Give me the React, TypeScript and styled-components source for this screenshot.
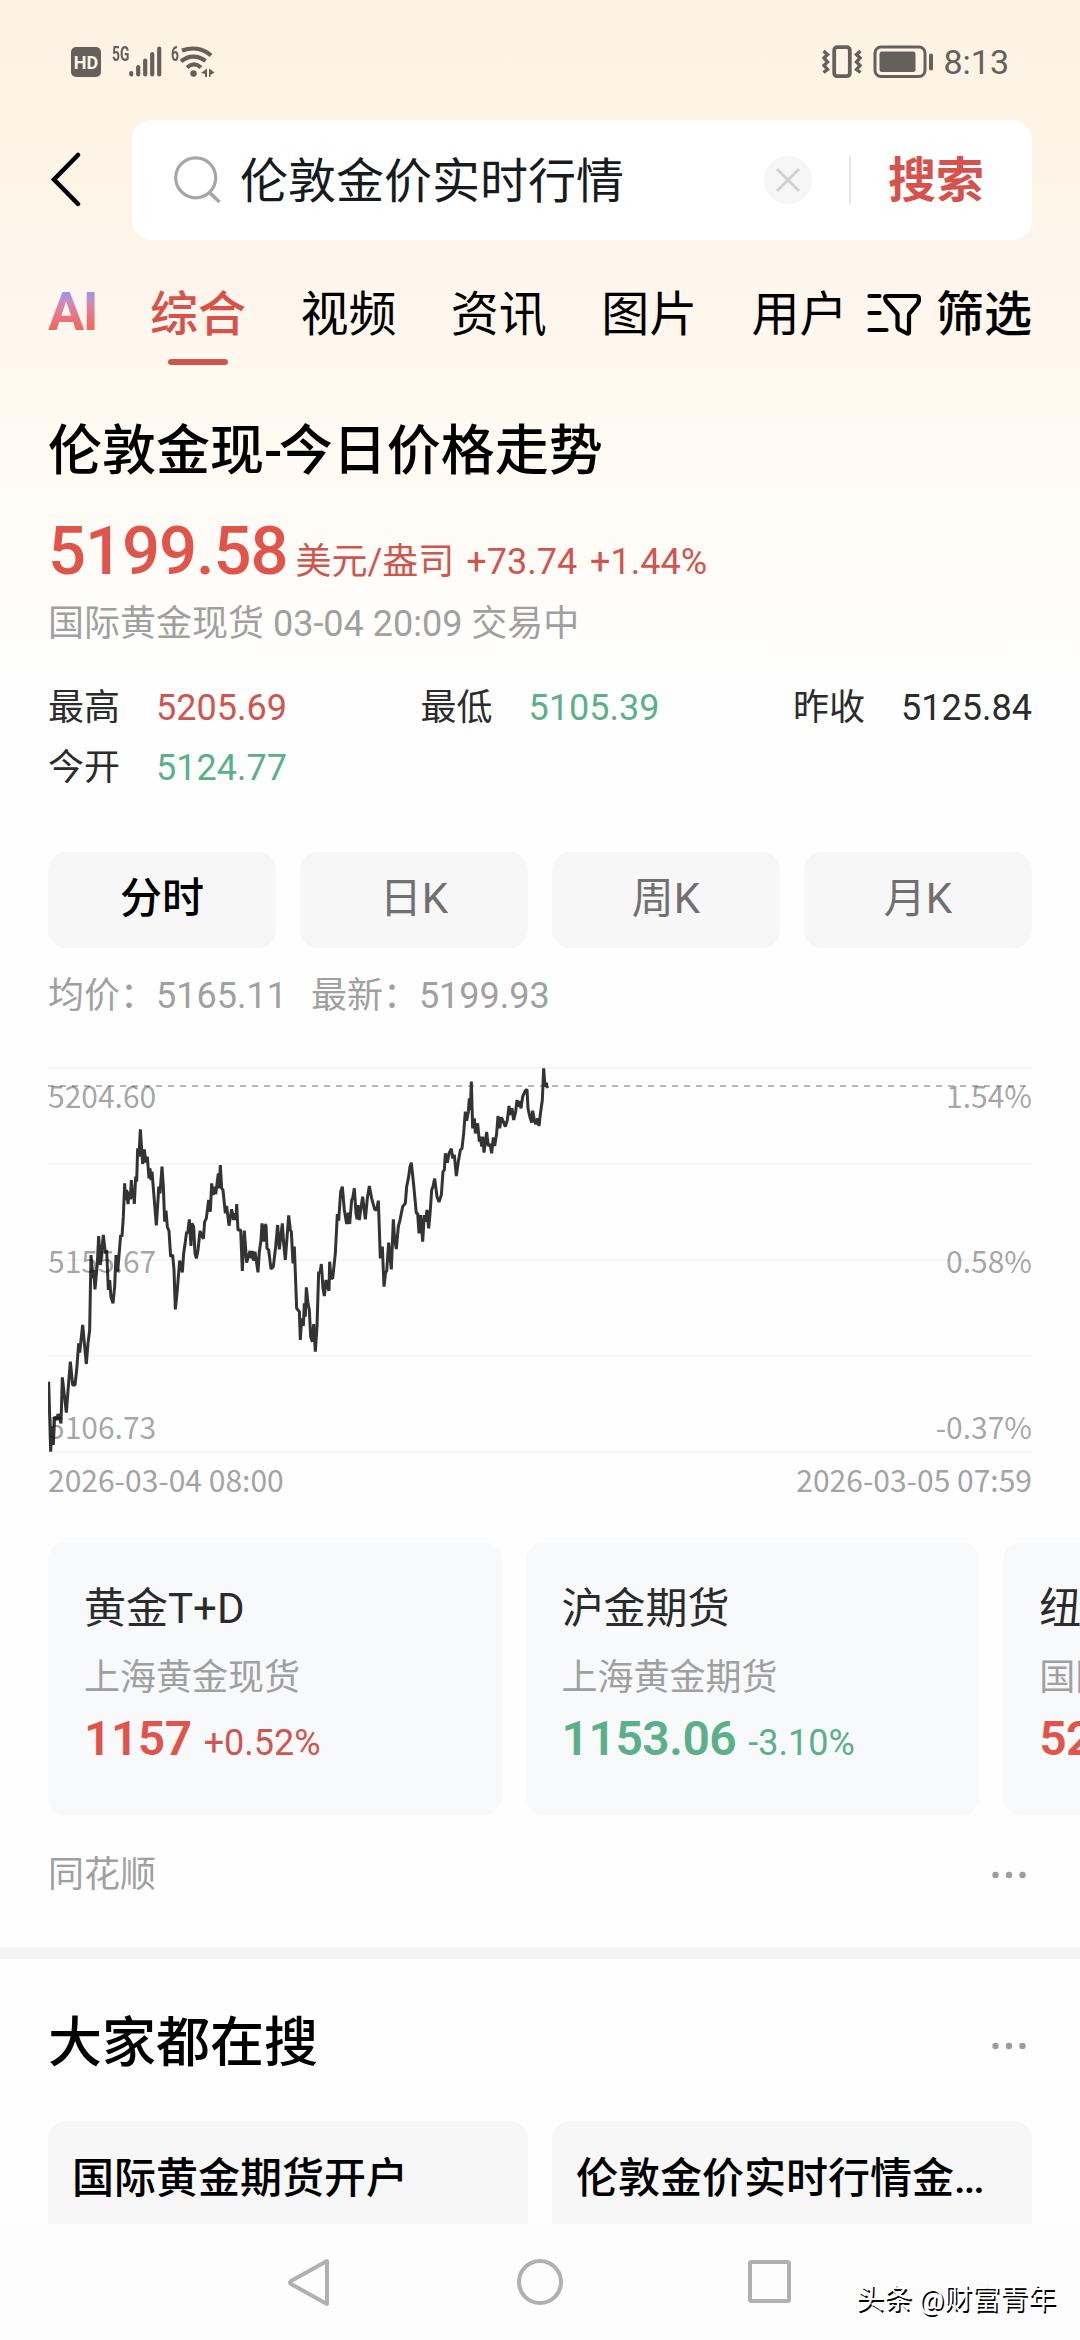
import React from "react";
import styled, { createGlobalStyle } from "styled-components";

const RED = "#e0554b";
const RED_SOFT = "#cf5650";
const GREEN = "#5bb08a";
const INK = "#65615a";
const UI = `Roboto, "Noto Sans CJK SC", sans-serif`;
const CJK = `"Noto Sans CJK SC", sans-serif`;

const GlobalStyle = createGlobalStyle`
  * { box-sizing: border-box; }
  body { margin: 0; background: #fefefe; font-family: ${UI}; }
  h1, h2, p { margin: 0; }
  button { border: 0; padding: 0; font: inherit; background: none; color: inherit; }
  svg { display: block; flex: none; }
`;

const Screen = styled.div`
  width: 1080px;
  height: 2340px;
  overflow: hidden;
  display: flex;
  flex-direction: column;
  background: linear-gradient(180deg, #fdf3e3 0, #fdf4e6 120px, #fef5ea 240px, #fff9f0 390px, #fffbf5 500px, #fffefb 620px, #fefefe 680px);
`;

/* status bar */
const StatusBar = styled.div`
  height: 120px;
  padding: 3px 71px 0 71px;
  display: flex;
  justify-content: space-between;
  align-items: center;
  color: ${INK};
`;
const StatusGroup = styled.div<{ $gap?: number }>`
  display: flex;
  align-items: center;
  gap: ${(p) => p.$gap ?? 0}px;
`;
const Hd = styled.span`
  width: 30px;
  height: 30px;
  border-radius: 5px;
  background: ${INK};
  color: #fdf4e6;
  font: 700 18px/31px Roboto, sans-serif;
  text-align: center;
`;
const NetLabel = styled.span<{ $left: number; $width: number }>`
  width: ${(p) => p.$width}px;
  margin-left: ${(p) => p.$left}px;
  font: 700 20px/16px Roboto, sans-serif;
  transform: scaleX(0.69);
  transform-origin: 0 50%;
  align-self: flex-start;
`;
const Clock = styled.span`
  margin-left: -3px;
  font-size: 34px;
  line-height: 40px;
`;

/* search */
const SearchRow = styled.div`
  height: 120px;
  padding-right: 48px;
  display: flex;
  align-items: center;
`;
const Back = styled.button`
  width: 132px;
  height: 120px;
  padding-left: 48px;
  display: flex;
  align-items: center;
`;
const SearchBox = styled.div`
  flex: 1;
  height: 120px;
  padding: 0 48px 0 42px;
  border-radius: 20px;
  background: #fff;
  display: flex;
  align-items: center;
`;
const Query = styled.span`
  flex: 1;
  margin-left: 16px;
  padding-top: 3px;
  font-size: 48px;
  line-height: 60px;
  color: #161b20;
`;
const Clear = styled.button`
  width: 48px;
  height: 48px;
  border-radius: 50%;
  background: #f6f6f6;
  display: grid;
  place-items: center;
`;
const Separator = styled.i`
  width: 2px;
  height: 48px;
  margin: 0 37px 0 37px;
  background: #e6e6e6;
`;
const SearchButton = styled.button`
  padding-top: 2px;
  font-size: 48px;
  line-height: 60px;
  font-weight: 700;
  color: #d6534d;
`;

/* tabs */
const Tabs = styled.nav`
  height: 126px;
  padding: 45px 48px 0 48px;
  display: flex;
  align-items: flex-start;
`;
const AiTab = styled.span`
  width: 102px;
  font: 700 54px/53px Roboto, sans-serif;
  letter-spacing: -1.5px;
  background: linear-gradient(180deg, #8f9bea 12%, #c78bc4 30%, #e8798c 52%, #ee6a66 78%);
  -webkit-background-clip: text;
  background-clip: text;
  color: transparent;
`;
const Tab = styled.span<{ $active?: boolean; $last?: boolean }>`
  width: 96px;
  margin-right: ${(p) => (p.$last ? 0 : 54.4)}px;
  font-size: 48px;
  line-height: 60px;
  font-weight: ${(p) => (p.$active ? 500 : 400)};
  color: ${(p) => (p.$active ? "#d6534d" : "#000")};
  white-space: nowrap;
  &::after {
    content: "";
    display: block;
    width: 60px;
    height: 6px;
    margin: 14px auto 0;
    border-radius: 3px;
    background: ${(p) => (p.$active ? RED_SOFT : "transparent")};
  }
`;
const Filter = styled.button`
  margin-left: auto;
  display: flex;
  align-items: center;
  gap: 15px;
  font-size: 48px;
  line-height: 60px;
  font-weight: 500;
  white-space: nowrap;
`;

/* quote */
const Quote = styled.section`
  padding: 51px 48px 0;
  display: flex;
  flex-direction: column;
`;
const Title = styled.h1`
  font-size: 54px;
  line-height: 70px;
  font-weight: 500;
  color: #000;
`;
const Tight = styled.span<{ $by: number }>`
  letter-spacing: -${(p) => p.$by}px;
`;
const PriceLine = styled.div`
  margin-top: 24px;
  height: 80px;
  display: flex;
  align-items: baseline;
  line-height: 80px;
  font-size: 36px;
  color: ${RED_SOFT};
  white-space: pre;
`;
const Price = styled.strong`
  font-size: 67px;
  font-weight: 500;
  letter-spacing: -1.1px;
  color: ${RED};
  margin-right: 8px;
`;
const Change = styled.span`
  margin-left: 12px;
  word-spacing: 4px;
`;
const Muted = styled.p<{ $top: number }>`
  margin-top: ${(p) => p.$top}px;
  font-size: 36px;
  line-height: 50px;
  color: #a0a0a0;
  white-space: pre;
`;
const Stats = styled.div`
  margin-top: 29px;
  display: grid;
  grid-template-columns: repeat(3, auto);
  justify-content: space-between;
  grid-auto-rows: 60px;
`;
const Stat = styled.div`
  display: flex;
  gap: 36px;
  font-size: 36px;
  line-height: 60px;
  color: #2b2b2b;
`;
const StatValue = styled.span<{ $color: string }>`
  color: ${(p) => p.$color};
`;
const Periods = styled.div`
  margin-top: 54px;
  display: grid;
  grid-template-columns: repeat(4, 1fr);
  gap: 24px;
`;
const Period = styled.button<{ $active?: boolean }>`
  height: 96px;
  border-radius: 18px;
  background: #f7f7f7;
  font-size: 42px;
  line-height: 93px;
  padding-bottom: 3px;
  font-weight: ${(p) => (p.$active ? 500 : 400)};
  color: ${(p) => (p.$active ? "#000" : "#707070")};
`;
const Averages = styled.div`
  margin-top: 23px;
  display: flex;
  gap: 24px;
  font-size: 36px;
  line-height: 50px;
  color: #a0a0a0;
`;

/* chart */
const Chart = styled.div`
  position: relative;
  height: 390px;
  margin-top: 43px;
  font-family: ${CJK};
  font-size: 30px;
  line-height: 40px;
  color: rgba(0, 0, 0, 0.37);
`;
const ScaleRow = styled.div<{ $top: number }>`
  position: absolute;
  left: 0;
  right: 0;
  top: ${(p) => p.$top}px;
  display: flex;
  justify-content: space-between;
`;
const TimeRow = styled.div`
  margin-top: 5px;
  display: flex;
  justify-content: space-between;
  font-family: ${CJK};
  font-size: 30px;
  line-height: 40px;
  color: #a3a3a3;
`;

/* related markets */
const Markets = styled.div`
  margin-top: 43px;
  padding-left: 48px;
  display: flex;
  gap: 24px;
  overflow: hidden;
`;
const Market = styled.article`
  flex: none;
  width: 453.6px;
  height: 273px;
  padding: 37px 36px 0;
  border-radius: 18px;
  background: #f8f9fb;
  display: flex;
  flex-direction: column;
  white-space: nowrap;
`;
const MarketName = styled.span`
  font-size: 42px;
  line-height: 60px;
  color: #2b2b2b;
`;
const MarketSource = styled.span`
  margin-top: 16px;
  font-size: 36px;
  line-height: 46px;
  color: #a0a0a0;
`;
const MarketPrice = styled.span<{ $up: boolean }>`
  margin-top: 8px;
  display: flex;
  align-items: baseline;
  gap: 12px;
  font-size: 36px;
  line-height: 60px;
  color: ${(p) => (p.$up ? RED_SOFT : GREEN)};
  b {
    font-size: 48px;
    font-weight: 600;
    letter-spacing: -0.5px;
    color: ${(p) => (p.$up ? RED : GREEN)};
  }
`;
const Footer = styled.div`
  margin-top: 35px;
  height: 97px;
  padding: 0 53px 0 48px;
  display: flex;
  align-items: flex-start;
  justify-content: space-between;
  font-size: 36px;
  line-height: 50px;
  color: #a0a0a0;
`;
const DotsBox = styled.span<{ $h: number }>`
  height: ${(p) => p.$h}px;
  display: flex;
  align-items: center;
`;
const Band = styled.div`
  height: 12px;
  flex: none;
  background: #f4f4f4;
`;

/* suggestions */
const Suggest = styled.section`
  height: 265px;
  flex: none;
  padding: 50px 48px 0;
  overflow: hidden;
`;
const SuggestHead = styled.div`
  display: flex;
  justify-content: space-between;
  padding-right: 5px;
`;
const SuggestTitle = styled.h2`
  font-size: 54px;
  line-height: 70px;
  font-weight: 500;
  color: #000;
`;
const SuggestGrid = styled.div`
  margin-top: 38px;
  display: grid;
  grid-template-columns: 1fr 1fr;
  gap: 24px;
`;
const SuggestCard = styled.div`
  height: 130px;
  padding: 28px 24px 0;
  border-radius: 18px;
  background: #f7f7f7;
  font-size: 42px;
  line-height: 60px;
  font-weight: 500;
  white-space: nowrap;
  color: #000;
`;

/* system navigation */
const NavBar = styled.div`
  flex: 1;
  position: relative;
  background: #fcfcfc;
  display: flex;
  justify-content: center;
  align-items: center;
  gap: 182px;
`;
const Watermark = styled.span`
  position: absolute;
  right: 24px;
  top: 58px;
  font-size: 28px;
  line-height: 36px;
  color: #fff;
  text-shadow: 1.5px 1.5px 0.5px #000;
`;

const SERIES =
  "56,1025 62,1235 66,1160 70,1215 74,1130 80,1140 84,1122 93,1150 97,1012 109,1118 115,1040 121,965 128,1035 135,1035 140,990 146,910 149,938 158,855 169,972 174,910 179,870 183,645 188,715 191,690 195,748 202,670 206,588 211,675 220,585 226,640 230,630 235,750 239,720 243,772 249,790 254,740 258,645 263,695 272,585 276,590 280,530 284,430 287,480 290,450 294,492 298,455 301,478 304,420 308,475 310,450 313,492 317,410 320,425 323,325 327,350 331,268 338,372 343,328 348,368 352,350 357,415 360,385 363,420 366,395 379,556 385,465 386,440 390,460 396,380 400,440 404,545 408,512 412,560 417,573 422,650 428,645 432,690 436,808 441,760 449,662 457,697 461,640 466,605 470,575 473,580 478,538 483,618 486,550 491,560 495,640 499,655 504,630 510,573 520,597 524,545 529,535 536,480 541,515 545,430 549,465 553,440 557,463 565,400 568,445 571,375 575,445 579,450 586,520 590,498 597,557 605,508 611,540 615,520 618,540 620,492 624,570 632,570 637,693 643,572 650,668 660,633 664,655 667,633 670,662 675,635 684,697 688,635 693,600 696,550 701,605 705,555 708,555 711,625 716,630 723,687 730,680 737,620 743,555 748,628 757,550 761,610 766,660 776,526 781,570 784,575 789,670 793,620 800,805 808,815 811,900 815,835 820,858 823,790 826,830 829,742 834,790 838,810 842,890 847,905 851,852 856,935 861,860 866,695 870,700 874,672 879,745 883,768 888,720 892,740 897,752 899,665 903,715 908,715 916,640 922,522 926,542 932,455 937,440 943,510 950,552 955,518 959,552 965,480 968,475 973,445 978,520 981,538 984,495 988,540 992,510 998,470 1006,538 1012,475 1018,438 1025,475 1034,508 1040,510 1045,482 1051,655 1057,620 1062,740 1067,695 1070,695 1076,608 1084,688 1090,538 1094,600 1099,627 1105,560 1110,540 1113,525 1118,500 1126,490 1130,440 1136,410 1140,380 1144,368 1151,435 1159,520 1163,520 1167,580 1172,525 1178,605 1183,525 1187,545 1191,510 1196,565 1201,510 1205,450 1209,440 1214,416 1221,470 1227,486 1234,465 1239,395 1243,390 1246,340 1252,368 1257,340 1264,326 1268,355 1273,345 1279,408 1285,365 1291,330 1296,325 1301,280 1306,215 1310,242 1315,215 1318,175 1321,210 1324,125 1328,265 1333,235 1336,280 1343,250 1348,305 1351,290 1355,320 1358,290 1362,338 1370,276 1375,318 1380,312 1385,340 1390,292 1394,318 1400,280 1404,228 1409,265 1414,232 1420,245 1426,260 1432,240 1437,198 1442,225 1446,205 1451,240 1457,215 1461,180 1465,200 1468,183 1473,205 1478,170 1486,152 1491,148 1494,205 1500,232 1505,248 1508,212 1514,245 1518,252 1523,235 1527,258 1532,215 1537,180 1541,85 1545,140 1549,128 1552,145";

const Dots = () => (
  <svg width="36" height="8" viewBox="0 0 36 8" fill="#9c9c9c">
    <circle cx="4.5" cy="4" r="3.2" />
    <circle cx="18" cy="4" r="3.2" />
    <circle cx="31.5" cy="4" r="3.2" />
  </svg>
);

const SignalIcon = () => (
  <svg width="34" height="32" viewBox="0 0 34 32" stroke={INK} strokeWidth="4.2" strokeLinecap="round">
    <path d="M2.2 27v1.5M9.2 21v7.5M16.2 14.500v14M23.200 8v20.500M30.200 2.500v26" />
  </svg>
);

const WifiIcon = () => (
  <svg width="36" height="32" viewBox="0 0 36 32" fill="none" stroke={INK} strokeWidth="4.2">
    <path d="M2 4.500C12 1 23 2 31 9.500" />
    <path d="M1 15.500C8.500 9 18 9 25.500 15" />
    <path d="M7 21.500c4.500-4 9.500-4 14 0" />
    <circle cx="13.500" cy="27.500" r="3.200" fill={INK} stroke="none" />
    <path d="M27 22.500v8.500h-2v-3l-4-1zM29 22.500l5.500 4-4 2.500v2H29z" fill={INK} stroke="none" />
  </svg>
);

const VibrateIcon = () => (
  <svg width="40" height="34" viewBox="0 0 40 34" fill="none" stroke={INK} strokeWidth="3.4">
    <rect x="12.200" y="2.200" width="15.600" height="29" rx="3" strokeWidth="3.800" />
    <path d="M1.500 6l4 3.500-3.500 3.500 3.500 4-3.500 3.500 3.500 4-4 3" />
    <path d="M38.500 6l-4 3.500 3.500 3.500-3.500 4 3.500 3.500-3.500 4 4 3" />
  </svg>
);

const BatteryIcon = () => (
  <svg width="62" height="34" viewBox="0 0 62 34" fill="none" stroke={INK}>
    <rect x="2" y="2" width="50" height="29.500" rx="6" strokeWidth="3" />
    <rect x="6.500" y="6.500" width="36" height="20.500" rx="2.500" fill={INK} stroke="none" />
    <path d="M58 10.500v13" strokeWidth="4" strokeLinecap="round" />
  </svg>
);

const markets = [
  { name: "黄金T+D", source: "上海黄金现货", price: "1157", change: "+0.52%", up: true },
  { name: "沪金期货", source: "上海黄金期货", price: "1153.06", change: "-3.10%", up: false },
  { name: "纽约黄金", source: "国际黄金期货", price: "5211.30", change: "+1.71%", up: true },
];

const stats = [
  { label: "最高", value: "5205.69", color: RED_SOFT },
  { label: "最低", value: "5105.39", color: GREEN },
  { label: "昨收", value: "5125.84", color: "#2b2b2b" },
  { label: "今开", value: "5124.77", color: GREEN },
];

export default function App() {
  return (
    <Screen>
      <GlobalStyle />
      <StatusBar>
        <StatusGroup>
          <Hd>HD</Hd>
          <NetLabel $left={11} $width={17}>5G</NetLabel>
          <SignalIcon />
          <NetLabel $left={8} $width={9}>6</NetLabel>
          <WifiIcon />
        </StatusGroup>
        <StatusGroup $gap={11}>
          <VibrateIcon />
          <BatteryIcon />
          <Clock>8:13</Clock>
        </StatusGroup>
      </StatusBar>

      <SearchRow>
        <Back aria-label="返回">
          <svg width="34" height="56" viewBox="0 0 34 56" fill="none" stroke="#000" strokeWidth="4.5" strokeLinecap="round">
            <path d="M30 3L6 27.500 30 52" />
          </svg>
        </Back>
        <SearchBox>
          <svg width="50" height="50" viewBox="0 0 50 50" fill="none" stroke="#a6a6a6" strokeWidth="3.2">
            <circle cx="21.700" cy="22.800" r="20" />
            <path d="M35.500 37.500L45.500 47" strokeWidth="3.600" />
          </svg>
          <Query>伦敦金价实时行情</Query>
          <Clear aria-label="清除">
            <svg width="24" height="24" viewBox="0 0 24 24" stroke="#d0d0d0" strokeWidth="3">
              <path d="M1 1l22 22M23 1L1 23" />
            </svg>
          </Clear>
          <Separator />
          <SearchButton>搜索</SearchButton>
        </SearchBox>
      </SearchRow>

      <Tabs>
        <AiTab>AI</AiTab>
        <Tab $active>综合</Tab>
        <Tab>视频</Tab>
        <Tab>资讯</Tab>
        <Tab>图片</Tab>
        <Tab $last>用户</Tab>
        <Filter>
          <svg width="54" height="46" viewBox="0 0 54 46" fill="none" stroke="#000" strokeWidth="4.2" strokeLinecap="round" strokeLinejoin="round">
            <path d="M2.500 4h10M2.500 21h10M2.500 38h17" />
            <path d="M20 4h29q3 0 3 3t-1.500 5L42 22v18q0 2-2 1.500l-7.500-4q-2-1-2-3V22L19 9q-2-5 1-5z" />
          </svg>
          筛选
        </Filter>
      </Tabs>

      <Quote>
        <Title>
          伦敦金现<Tight $by={3.5}>-</Tight>今日价格走势
        </Title>
        <PriceLine>
          <Price>5199.58</Price>
          美元/盎司
          <Change>+73.74 +1.44%</Change>
        </PriceLine>
        <Muted $top={8}>国际黄金现货 03-04 20:09 交易中</Muted>
        <Stats>
          {stats.map((s) => (
            <Stat key={s.label}>
              {s.label}
              <StatValue $color={s.color}>{s.value}</StatValue>
            </Stat>
          ))}
        </Stats>
        <Periods>
          <Period $active>分时</Period>
          <Period>日K</Period>
          <Period>周K</Period>
          <Period>月K</Period>
        </Periods>
        <Averages>
          <span>均价：5165.11</span>
          <span>最新：5199.93</span>
        </Averages>
        <Chart>
          <svg width="984" height="390" viewBox="54 72 2952 1170" fill="none">
            <path d="M54 84H3006M54 371H3006M54 660H3006M54 947H3006M54 1236H3006" stroke="#f5f5f5" strokeWidth="6" />
            <path d="M54 138H3006" stroke="#a0a0a0" strokeWidth="4.5" strokeDasharray="18 18" />
            <polyline points={SERIES} stroke="#333" strokeWidth="9" strokeLinejoin="bevel" />
          </svg>
          <ScaleRow $top={11}>
            <span>5204.60</span>
            <span>1.54%</span>
          </ScaleRow>
          <ScaleRow $top={176}>
            <span>5155.67</span>
            <span>0.58%</span>
          </ScaleRow>
          <ScaleRow $top={342}>
            <span>5106.73</span>
            <span>-0.37%</span>
          </ScaleRow>
        </Chart>
        <TimeRow>
          <span>2026-03-04 08:00</span>
          <span>2026-03-05 07:59</span>
        </TimeRow>
      </Quote>

      <Markets>
        {markets.map((m) => (
          <Market key={m.name}>
            <MarketName>{m.name}</MarketName>
            <MarketSource>{m.source}</MarketSource>
            <MarketPrice $up={m.up}>
              <b>{m.price}</b>
              {m.change}
            </MarketPrice>
          </Market>
        ))}
      </Markets>
      <Footer>
        同花顺
        <DotsBox $h={50}>
          <Dots />
        </DotsBox>
      </Footer>
      <Band />

      <Suggest>
        <SuggestHead>
          <SuggestTitle>大家都在搜</SuggestTitle>
          <DotsBox $h={74}>
            <Dots />
          </DotsBox>
        </SuggestHead>
        <SuggestGrid>
          <SuggestCard>国际黄金期货开户</SuggestCard>
          <SuggestCard>
            伦敦金价实时行情金<Tight $by={2}>...</Tight>
          </SuggestCard>
        </SuggestGrid>
      </Suggest>

      <NavBar>
        <svg width="46" height="50" viewBox="0 0 46 50" fill="none" stroke="#b0b0b0" strokeWidth="4" strokeLinejoin="round">
          <path d="M40 4v43L4 27q-2-1.500 0-3z" />
        </svg>
        <svg width="50" height="50" viewBox="0 0 50 50" fill="none" stroke="#b0b0b0" strokeWidth="4">
          <circle cx="25" cy="25" r="21" />
        </svg>
        <svg width="46" height="50" viewBox="0 0 46 50" fill="none" stroke="#b0b0b0" strokeWidth="4">
          <rect x="3" y="5" width="39" height="39" rx="1.500" />
        </svg>
        <Watermark>头条 @财富青年</Watermark>
      </NavBar>
    </Screen>
  );
}
